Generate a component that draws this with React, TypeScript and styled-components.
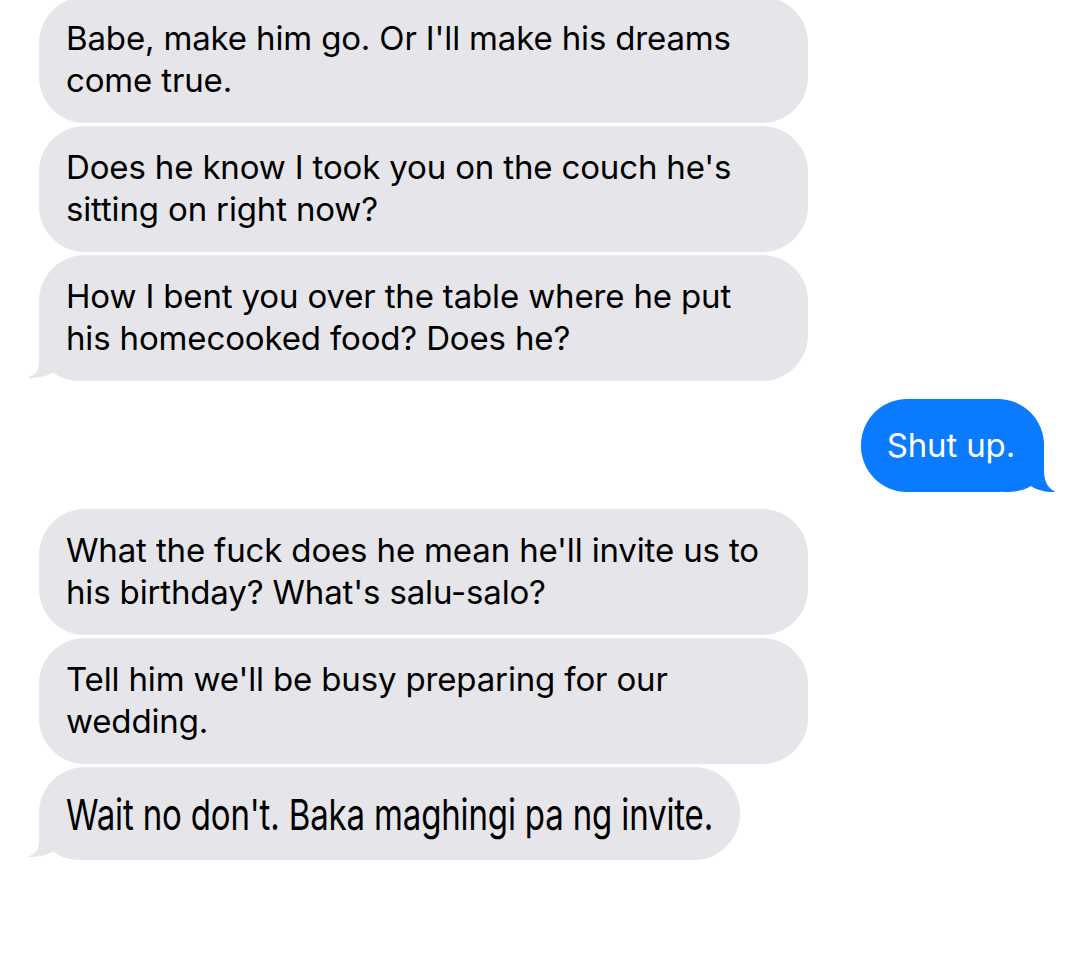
import React from "react";
import styled, { createGlobalStyle, css } from "styled-components";

const GlobalStyle = createGlobalStyle`
  html, body {
    margin: 0;
    padding: 0;
    background: #ffffff;
  }
  body {
    font-family: Inter, "Noto Sans", "Liberation Sans", sans-serif;
    -webkit-font-smoothing: antialiased;
  }
`;

const GREY = "#E5E5EA";
const BLUE = "#0A7AFF";

type Side = "them" | "me";

interface Message {
  lines: string[];
  stretched?: boolean;
}

interface Group {
  from: Side;
  messages: Message[];
}

const conversation: Group[] = [
  {
    from: "them",
    messages: [
      { lines: ["Babe, make him go. Or I'll make his dreams", "come true."] },
      { lines: ["Does he know I took you on the couch he's", "sitting on right now?"] },
      { lines: ["How I bent you over the table where he put", "his homecooked food? Does he?"] },
    ],
  },
  {
    from: "me",
    messages: [{ lines: ["Shut up."] }],
  },
  {
    from: "them",
    messages: [
      { lines: ["What the fuck does he mean he'll invite us to", "his birthday? What's salu-salo?"] },
      { lines: ["Tell him we'll be busy preparing for our", "wedding."] },
      { lines: ["Wait no don't. Baka maghingi pa ng invite."], stretched: true },
    ],
  },
];

const Thread = styled.div`
  width: 1079px;
  margin-top: -3px;
  display: flex;
  flex-direction: column;
  gap: 17.5px;
`;

const GroupBox = styled.div<{ $from: Side }>`
  display: flex;
  flex-direction: column;
  gap: 3px;
  align-items: ${(p) => (p.$from === "me" ? "flex-end" : "flex-start")};
  padding-left: ${(p) => (p.$from === "me" ? "0" : "39px")};
  padding-right: ${(p) => (p.$from === "me" ? "35px" : "0")};
`;

const Bubble = styled.div<{ $from: Side; $multi: boolean }>`
  position: relative;
  box-sizing: border-box;
  border-radius: 46px;
  font-size: 33px;
  line-height: 42px;
  letter-spacing: -0.15px;
  color: ${(p) => (p.$from === "me" ? "#ffffff" : "#000000")};
  background: ${(p) => (p.$from === "me" ? BLUE : GREY)};
  ${(p) =>
    p.$multi
      ? css`
          width: 769px;
          height: 126px;
          padding: 20px 27px 22px 27px;
        `
      : css`
          height: 93px;
          display: flex;
          align-items: center;
          padding: 0 ${p.$from === "me" ? "29px 0 26px" : "27px"};
        `}
`;

const Line = styled.span<{ $stretched?: boolean }>`
  display: block;
  white-space: nowrap;
  position: relative;
  z-index: 1;
  ${(p) =>
    p.$stretched &&
    css`
      transform: translateY(-5px) scale(1, 1.3);
      transform-origin: left 4px;
    `}
`;

const Tail = styled.svg<{ $from: Side }>`
  position: absolute;
  bottom: 0;
  width: 60px;
  height: 50px;
  ${(p) =>
    p.$from === "me"
      ? css`
          right: -19px;
          transform: scaleX(-1);
        `
      : css`
          left: -19px;
        `}
`;

const TailShape: React.FC<{ from: Side }> = ({ from }) => (
  <Tail $from={from} viewBox="0 0 60 50" aria-hidden>
    {from === "them" ? (
      <path
        d="M19 0 L19 31 C19 39 16 44 8.5 46.2 C8 46.5 8.3 47 9 47 C18 47.2 27 45 33 41.5 C40 46.5 50 50 60 50 L60 0 Z"
        fill={GREY}
      />
    ) : (
      <path
        d="M19 0 L19 28 C19 38 16 46 8 49.5 C8 49.8 8.3 50 9 50 C18 50 26 48 32 44 C40 49 48 50 58 50 L60 50 L60 0 Z"
        fill={BLUE}
      />
    )}
  </Tail>
);

export default function App() {
  return (
    <>
      <GlobalStyle />
      <Thread>
        {conversation.map((group, gi) => (
          <GroupBox key={gi} $from={group.from}>
            {group.messages.map((msg, mi) => (
              <Bubble key={mi} $from={group.from} $multi={msg.lines.length > 1}>
                {mi === group.messages.length - 1 && <TailShape from={group.from} />}
                <div>
                  {msg.lines.map((line, li) => (
                    <Line key={li} $stretched={msg.stretched}>
                      {line}
                    </Line>
                  ))}
                </div>
              </Bubble>
            ))}
          </GroupBox>
        ))}
      </Thread>
    </>
  );
}
